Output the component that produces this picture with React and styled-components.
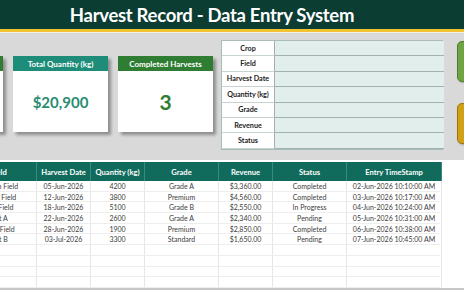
import React from 'react';
import styled, { createGlobalStyle } from 'styled-components';

const GlobalStyle = createGlobalStyle`
  html, body {
    margin: 0;
    padding: 0;
    background: #ffffff;
    overflow: hidden;
  }
  body {
    font-family: Lato, "Open Sans", sans-serif;
  }
`;

const PAGE = styled.div`
  width: 464px;
  height: 290px;
  display: flex;
  flex-direction: column;
  overflow: hidden;
  background: #ffffff;
`;

const HEADER = styled.div`
  height: 29px;
  flex-shrink: 0;
  background: #0c3d33;
  border-bottom: 3px solid #f2c230;
  box-shadow: 0 1px 0 #f4f1e2;
  display: flex;
  align-items: center;
  justify-content: center;
  padding-right: 40px;
`;

const TITLE = styled.h1`
  margin: 1px 0 0;
  color: #ffffff;
  font-size: 18.5px;
  font-weight: 700;
  letter-spacing: -0.3px;
`;

const PANEL = styled.div`
  height: 120px;
  margin-top: 1px;
  flex-shrink: 0;
  background: #d9d9d9;
  padding-top: 7px;
  display: flex;
  align-items: flex-start;
  margin-left: -92px;
`;

const CARDS = styled.div`
  display: flex;
  gap: 10px;
  margin-top: 16px;
  margin-right: 8px;
`;

const CARD = styled.div`
  width: 95px;
  height: 76px;
  background: #ffffff;
  box-shadow: 3px 3px 3px rgba(0, 0, 0, 0.35);
  display: flex;
  flex-direction: column;
`;

const CARD_HEAD = styled.div`
  height: 15px;
  background: ${(p) => p.$color};
  color: #ffffff;
  font-size: 8px;
  font-weight: 700;
  display: flex;
  align-items: center;
  justify-content: center;
`;

const CARD_VALUE = styled.div`
  flex: 1;
  display: flex;
  align-items: center;
  justify-content: center;
  color: ${(p) => p.$color};
  font-size: ${(p) => p.$size}px;
  font-weight: 700;
`;

const FORM = styled.div`
  width: 222px;
  display: grid;
  grid-template-columns: 53px 169px;
  grid-auto-rows: 15.4px;
  border: 1px solid #a9bcb8;
  box-sizing: border-box;
`;

const LABEL = styled.div`
  background: #ffffff;
  border-bottom: 1px solid #c8d3d1;
  border-right: 1px solid #9fb2ae;
  font-size: 7.2px;
  font-weight: 700;
  color: #222;
  display: flex;
  align-items: center;
  justify-content: center;
  white-space: nowrap;
`;

const INPUT = styled.div`
  background: #e2eeec;
  border-bottom: 1px solid #9fb2ae;
`;

const BUTTONS = styled.div`
  margin-left: 14px;
  margin-top: 1px;
  display: flex;
  flex-direction: column;
  gap: 21px;
`;

const ACTION = styled.div`
  width: 40px;
  height: 41px;
  border-radius: 5px;
  background: ${(p) => p.$bg};
  border: 1px solid ${(p) => p.$edge};
  box-sizing: border-box;
  box-shadow: 1px 1px 2px rgba(0, 0, 0, 0.25);
`;

const TABLE_WRAP = styled.div`
  margin-top: 2px;
  flex: 1;
  overflow: hidden;
  border-bottom: 2px solid #c6c6c6;
`;

const TABLE = styled.div`
  margin-left: -39px;
  width: 481px;
`;

const COLS = '76px 54px 54px 74px 54px 74px 95px';

const HEAD_ROW = styled.div`
  display: grid;
  grid-template-columns: ${COLS};
  height: 19px;
  background: #106b5c;
`;

const HEAD_CELL = styled.div`
  color: #ffffff;
  font-size: 7.6px;
  font-weight: 700;
  display: flex;
  align-items: center;
  justify-content: center;
  border-right: 1px solid #3a8a7d;
  white-space: nowrap;
`;

const ROW = styled.div`
  display: grid;
  grid-template-columns: ${COLS};
  height: 10.7px;
  border-bottom: 1px solid #eeeeee;
  box-sizing: border-box;
`;

const CELL = styled.div`
  font-size: 7px;
  color: #3c3c3c;
  display: flex;
  align-items: center;
  justify-content: center;
  border-right: 1px solid #e6e6e6;
  white-space: nowrap;
`;

const formFields = ['Crop', 'Field', 'Harvest Date', 'Quantity (kg)', 'Grade', 'Revenue', 'Status'];

const headers = ['Field', 'Harvest Date', 'Quantity (kg)', 'Grade', 'Revenue', 'Status', 'Entry TimeStamp'];

const records = [
  ['Garden Field', '05-Jun-2026', '4200', 'Grade A', '$3,360.00', 'Completed', '02-Jun-2026 10:10:00 AM'],
  ['Green Field', '12-Jun-2026', '3800', 'Premium', '$4,560.00', 'Completed', '03-Jun-2026 10:17:00 AM'],
  ['East Field', '18-Jun-2026', '5100', 'Grade B', '$2,550.00', 'In Progress', '04-Jun-2026 10:24:00 AM'],
  ['Plot A', '22-Jun-2026', '2600', 'Grade A', '$2,340.00', 'Pending', '05-Jun-2026 10:31:00 AM'],
  ['River Field', '28-Jun-2026', '1900', 'Premium', '$2,850.00', 'Completed', '06-Jun-2026 10:38:00 AM'],
  ['Plot B', '03-Jul-2026', '3300', 'Standard', '$1,650.00', 'Pending', '07-Jun-2026 10:45:00 AM'],
];

const emptyRows = [0, 1, 2, 3];

const App = () => {
  return (
    <PAGE>
      <GlobalStyle />
      <HEADER>
        <TITLE>Harvest Record - Data Entry System</TITLE>
      </HEADER>

      <PANEL>
        <CARDS>
          <CARD>
            <CARD_HEAD $color="#2e7d32">Total Harvests</CARD_HEAD>
            <CARD_VALUE $color="#2e7d32" $size={21}>6</CARD_VALUE>
          </CARD>
          <CARD>
            <CARD_HEAD $color="#1d8c78">Total Quantity (kg)</CARD_HEAD>
            <CARD_VALUE $color="#2a8c70" $size={15}>$20,900</CARD_VALUE>
          </CARD>
          <CARD>
            <CARD_HEAD $color="#2e7d32">Completed Harvests</CARD_HEAD>
            <CARD_VALUE $color="#2e7d32" $size={21}>3</CARD_VALUE>
          </CARD>
        </CARDS>

        <FORM>
          {formFields.map((f) => (
            <React.Fragment key={f}>
              <LABEL>{f}</LABEL>
              <INPUT />
            </React.Fragment>
          ))}
        </FORM>

        <BUTTONS>
          <ACTION $bg="#6ea442" $edge="#4f7d2c" />
          <ACTION $bg="#d1a016" $edge="#9c760c" />
        </BUTTONS>
      </PANEL>

      <TABLE_WRAP>
        <TABLE>
          <HEAD_ROW>
            {headers.map((h) => (
              <HEAD_CELL key={h}>{h}</HEAD_CELL>
            ))}
          </HEAD_ROW>
          {records.map((r, i) => (
            <ROW key={i}>
              {r.map((c, j) => (
                <CELL key={j}>{c}</CELL>
              ))}
            </ROW>
          ))}
          {emptyRows.map((k) => (
            <ROW key={'e' + k}>
              {headers.map((h) => (
                <CELL key={h} />
              ))}
            </ROW>
          ))}
        </TABLE>
      </TABLE_WRAP>
    </PAGE>
  );
};

export default App;
